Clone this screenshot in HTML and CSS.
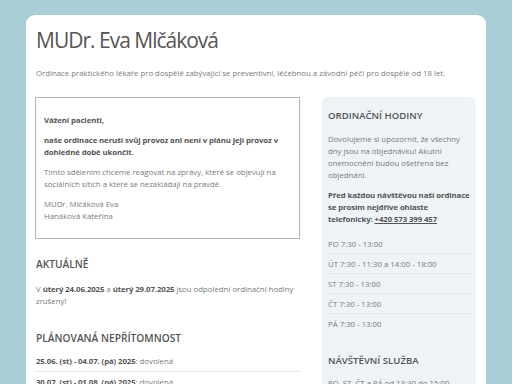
FILE: index.html
```html
<!DOCTYPE html>
<html lang="cs">
<head>
<meta charset="utf-8">
<title>MUDr. Eva Mlčáková</title>
<link rel="stylesheet" href="styles.css">
</head>
<body>
<div class="card">
  <h1 class="title">MUDr. Eva Mlčáková</h1>
  <p class="lead">Ordinace praktického lékaře pro dospělé zabývající se preventivní, léčebnou a závodní péčí pro dospělé od 18 let.</p>
  <div class="cols">
    <main class="main">
      <div class="notice">
        <p><strong>Vážení pacienti,</strong></p>
        <p><strong>naše ordinace neruší svůj provoz ani není v plánu její provoz v dohledné době ukončit.</strong></p>
        <p>Tímto sdělením chceme reagovat na zprávy, které se objevují na sociálních sítích a které se nezakládají na pravdě.</p>
        <p>MUDr. Mlčáková Eva<br>Hanáková Kateřina</p>
      </div>
      <h2 class="heading">AKTUÁLNĚ</h2>
      <p class="text">V <strong>úterý 24.06.2025</strong> a <strong>úterý 29.07.2025</strong> jsou odpolední ordinační hodiny zrušeny!</p>
      <h2 class="heading">PLÁNOVANÁ NEPŘÍTOMNOST</h2>
      <ul class="list">
        <li><strong>25.06. (st) - 04.07. (pá) 2025</strong>: dovolená</li>
        <li><strong>30.07. (st) - 01.08. (pá) 2025</strong>: dovolená</li>
      </ul>
    </main>
    <aside class="side">
      <h2 class="side-heading">ORDINAČNÍ HODINY</h2>
      <p class="text">Dovolujeme si upozornit, že všechny dny jsou na objednávku! Akutní onemocnění budou ošetřena bez objednání.</p>
      <p class="text"><strong>Před každou návštěvou naší ordinace se prosím nejdříve ohlaste telefonicky: <a class="phone" href="#">+420 573 399 457</a></strong></p>
      <ul class="hours">
        <li>PO 7:30 - 13:00</li>
        <li>ÚT 7:30 - 11:30 a 14:00 - 18:00</li>
        <li>ST 7:30 - 13:00</li>
        <li>ČT 7:30 - 13:00</li>
        <li>PÁ 7:30 - 13:00</li>
      </ul>
      <h2 class="side-heading side-heading2">NÁVŠTĚVNÍ SLUŽBA</h2>
      <p class="text">PO, ST, ČT a PÁ od 13:30 do 15:00</p>
    </aside>
  </div>
</div>
</body>
</html>
```
FILE: styles.css
```css
html, body {
  margin: 0;
  padding: 0;
}
body {
  background: #a8cfd6;
  font-family: "Open Sans", "Noto Sans", sans-serif;
  font-size: 7.8px;
  line-height: 12px;
  color: #7a7a7a;
  padding: 15px 26px 0 26px;
  height: 384px;
  box-sizing: border-box;
  overflow: hidden;
}
.card {
  background: #fff;
  border-radius: 9px 9px 0 0;
  padding: 11px 10px 20px 9px;
  min-height: 400px;
}
.title {
  margin: 0 0 0 1px;
  font-size: 21px;
  line-height: 28px;
  font-weight: 400;
  letter-spacing: -1px;
  color: #555;
}
.lead {
  margin: 13px 0 0 1px;
}
.cols {
  display: grid;
  grid-template-columns: 265px 154px;
  column-gap: 22px;
  margin-top: 18px;
  align-items: start;
}
.notice {
  border: 1px solid #b5b5b5;
  padding: 8px 8px;
}
.notice p {
  margin: 8px 0;
}
strong {
  font-weight: 700;
  letter-spacing: -0.1px;
  color: #555;
}
.heading {
  font-size: 10.2px;
  line-height: 14px;
  font-weight: 600;
  color: #555;
  margin: 18px 0 0 1px;
}
.main .text {
  margin: 12px 0 24px 1px;
}
.list {
  list-style: none;
  margin: 6px 0 0 0;
  padding: 0;
}
.list li {
  padding: 4px 0 4px 1px;
  border-bottom: 1px solid #e4e4e4;
}
.side {
  background: #edf3f6;
  border-radius: 6px 6px 0 0;
  padding: 12px 6px 10px 6px;
  min-height: 300px;
}
.side .text {
  margin: 8px 0;
}
.side-heading {
  font-size: 9.6px;
  line-height: 14px;
  font-weight: 600;
  color: #555;
  margin: 0 0 10px 0;
}
.side-heading2 {
  margin: 21px 0 9px 0;
}
.phone {
  color: #555;
  text-decoration: underline;
}
.hours {
  list-style: none;
  margin: 9px 0 0 0;
  padding: 0;
}
.hours li {
  padding: 4px 0 3px 0;
  border-bottom: 1px solid #dfe6ea;
}
.hours li:last-child {
  border-bottom: 0;
}
```
